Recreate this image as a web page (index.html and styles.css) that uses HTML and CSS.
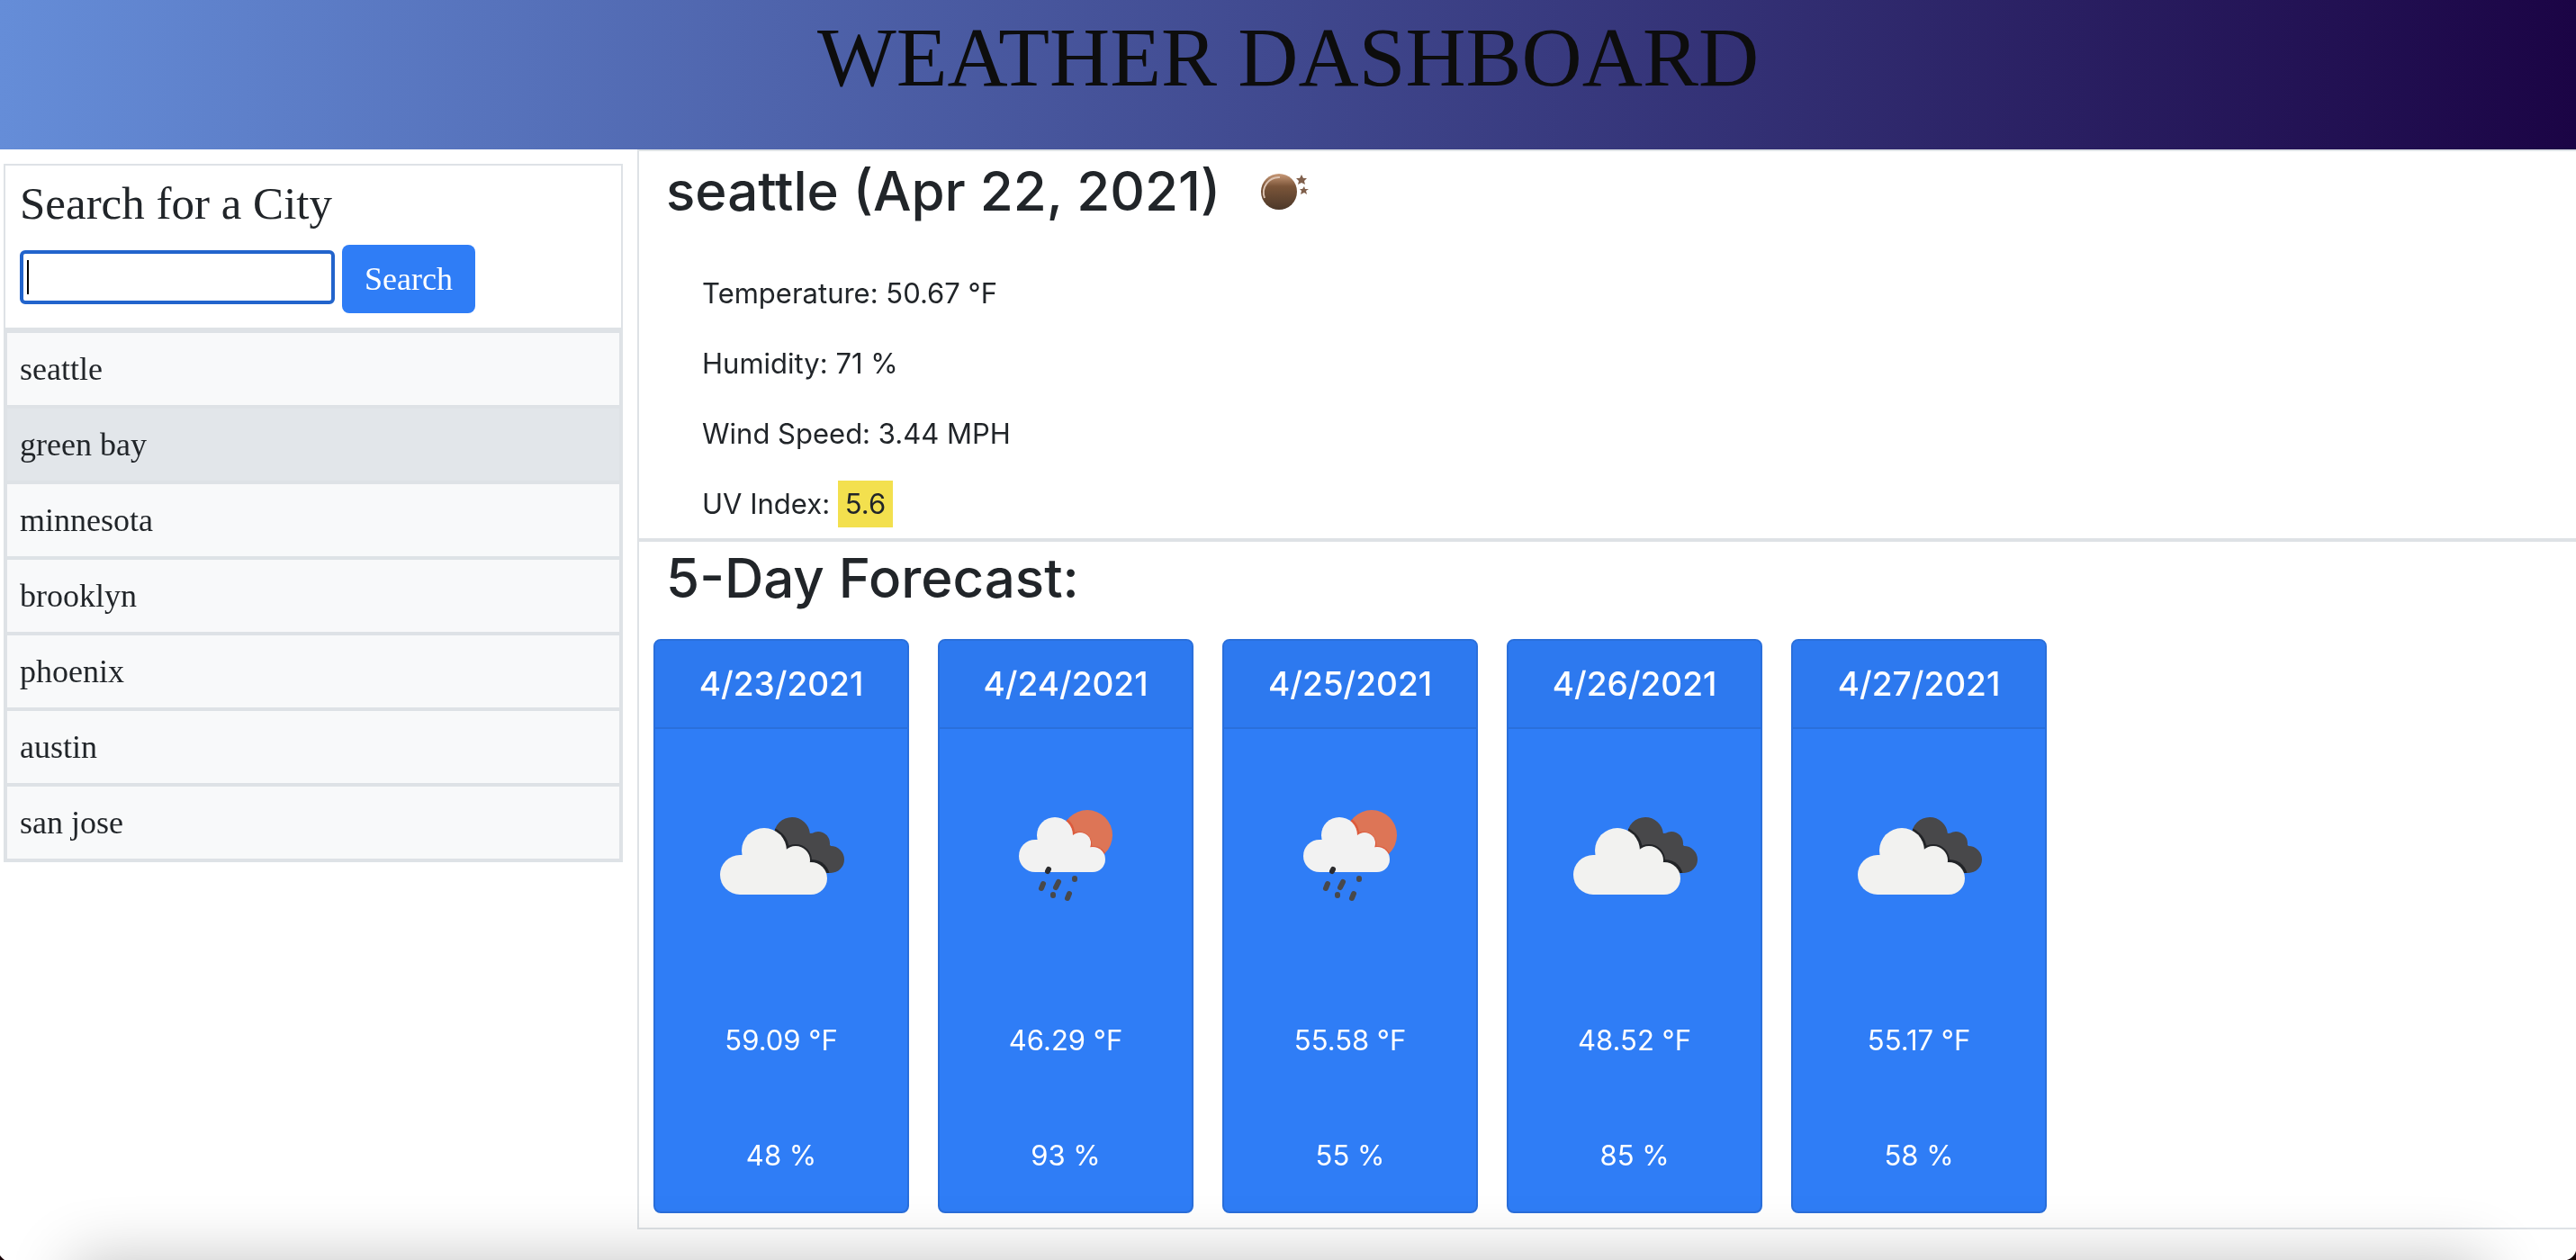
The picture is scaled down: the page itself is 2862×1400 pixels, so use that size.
FILE: index.html
```html
<!DOCTYPE html>
<html lang="en">
<head>
<meta charset="utf-8">
<title>Weather Dashboard</title>
<link rel="stylesheet" href="styles.css">
</head>
<body>
<svg class="sprite" aria-hidden="true">
  <clipPath id="darkcloud"><circle cx="100" cy="78" r="20"/><circle cx="129" cy="87" r="13"/><circle cx="143" cy="105" r="15"/><path d="M60 78h40l29-3 14 15v30H60z"/></clipPath>
  <symbol id="clouds" viewBox="0 0 200 200">
    <g transform="translate(12 0)"><g clip-path="url(#darkcloud)">
      <path fill="#48484a" d="M40 50h130v80H40z"/>
      <g fill="#222427" transform="translate(-12 0)"><circle cx="82" cy="95" r="27"/><circle cx="116" cy="106" r="18"/><circle cx="134" cy="125" r="20"/></g>
    </g></g>
    <g fill="#f2f2f0"><circle cx="54" cy="122" r="22"/><circle cx="81" cy="95" r="25"/><circle cx="116" cy="106" r="16"/><circle cx="133" cy="126" r="18"/><path d="M54 100h62l17 44H54z"/></g>
  </symbol>
  <symbol id="rain" viewBox="0 0 200 200">
    <circle cx="124" cy="78" r="28" fill="#dd7556"/>
    <g fill="#dc5a3c"><path d="M102 60a21 21 0 0 1 8 15a14 14 0 0 1 19 15a15 15 0 0 1 15 8l-20 10-35-25z"/></g>
    <g fill="#f2f2f2"><circle cx="66" cy="101" r="18"/><circle cx="88" cy="78" r="20"/><circle cx="116" cy="87" r="12"/><circle cx="130" cy="105" r="14"/><path d="M66 83h50l14 36H66z"/></g>
    <g stroke="#48484a" stroke-width="6" stroke-linecap="round"><path d="M81 116l-1 2" stroke="#2c2c2e"/><path d="M75 132l-2 5M92 130l-3 6M110 126v1M86 144v1M104 143l-2 5"/></g>
  </symbol>
</svg>

<header class="page-header"><h1>WEATHER DASHBOARD</h1></header>

<div class="layout">
  <aside class="sidebar">
    <form class="search">
      <label for="city">Search for a City</label>
      <div class="search-row">
        <input id="city" type="text" autofocus>
        <button type="button">Search</button>
      </div>
    </form>
    <ul class="history">
      <li><button type="button">seattle</button></li>
      <li><button type="button" class="active">green bay</button></li>
      <li><button type="button">minnesota</button></li>
      <li><button type="button">brooklyn</button></li>
      <li><button type="button">phoenix</button></li>
      <li><button type="button">austin</button></li>
      <li><button type="button">san jose</button></li>
    </ul>
  </aside>

  <main>
    <section class="current">
      <div class="title-row">
        <h2>seattle (Apr 22, 2021)</h2>
        <svg class="moon" viewBox="0 0 100 70" role="img" aria-label="Clear night">
          <defs><linearGradient id="moonfill" x1="0" y1="0" x2="0" y2="1"><stop offset="0" stop-color="#c99a78"/><stop offset=".35" stop-color="#7b5539"/><stop offset="1" stop-color="#4c3829"/></linearGradient></defs>
          <circle cx="47" cy="34" r="20" fill="url(#moonfill)"/>
          <path d="M31 41a17 17 0 0 1 17-23" fill="none" stroke="#dcc3b2" stroke-width="2"/>
          <path d="M72 15l2 4 4 0-3 3 1 4-4-2-4 2 1-4-3-3 4 0zM75 28l1 3 4 0-3 2 1 4-3-2-4 2 1-4-2-2 3 0z" fill="#80604c"/>
        </svg>
      </div>
      <ul class="readings">
        <li>Temperature: 50.67 °F</li>
        <li>Humidity: 71 %</li>
        <li>Wind Speed: 3.44 MPH</li>
        <li>UV Index: <span class="uv">5.6</span></li>
      </ul>
    </section>
    <section class="forecast">
      <h2>5-Day Forecast:</h2>
      <div class="cards">
        <article class="card"><h3>4/23/2021</h3><svg><use href="#clouds"/></svg><p>59.09 °F</p><p>48 %</p></article>
        <article class="card"><h3>4/24/2021</h3><svg><use href="#rain"/></svg><p>46.29 °F</p><p>93 %</p></article>
        <article class="card"><h3>4/25/2021</h3><svg><use href="#rain"/></svg><p>55.58 °F</p><p>55 %</p></article>
        <article class="card"><h3>4/26/2021</h3><svg><use href="#clouds"/></svg><p>48.52 °F</p><p>85 %</p></article>
        <article class="card"><h3>4/27/2021</h3><svg><use href="#clouds"/></svg><p>55.17 °F</p><p>58 %</p></article>
      </div>
    </section>
  </main>
</div>
</body>
</html>
```

FILE: styles.css
```css
* { box-sizing: border-box; }

body {
  margin: 0;
  min-height: 100vh;
  background: #fff;
  color: #212529;
  font: 400 31px/48px Inter, sans-serif;
  overflow-x: hidden;
}

h1, h2, h3, p, ul { margin: 0; padding: 0; }
ul { list-style: none; }
button { font: inherit; color: inherit; }

.sprite { position: absolute; width: 0; height: 0; }

.page-header {
  height: 166px;
  padding-top: 6px;
  background: linear-gradient(to right, #658dd8, #1b0445);
  text-align: center;
}
.page-header h1 {
  color: #0d0d0d;
  font: 400 93px/116px "Liberation Serif", serif;
}

.layout {
  display: grid;
  grid-template-columns: 24.74% 1fr;
  align-items: start;
}

/* Sidebar */
.sidebar {
  padding: 16px 16px 0 4px;
  font: 400 36px/48px "Liberation Serif", serif;
}
.search {
  padding: 12px 16px 16px;
  border: 2px solid #dee2e6;
}
.search label {
  display: block;
  font-size: 51px;
  line-height: 60px;
}
.search-row {
  display: flex;
  align-items: flex-start;
  gap: 8px;
  margin-top: 16px;
}
.search input {
  width: 350px;
  height: 60px;
  margin-top: 6px;
  padding: 2px 4px;
  border: 4px solid #2264cc;
  border-radius: 6px;
  outline: 0;
  /* text caret */
  background: linear-gradient(#000, #000) 4px center / 2px 38px no-repeat;
  caret-color: transparent;
  font: inherit;
}
.search button {
  width: 148px;
  height: 76px;
  padding: 0;
  border: 0;
  border-radius: 8px;
  background: #2f7df6;
  color: #fff;
}
.history { border: 2px solid #dee2e6; }
.history button {
  display: block;
  width: 100%;
  height: 84px;
  padding: 0 14px;
  border: 2px solid #dee2e6;
  background: #f8f9fa;
  text-align: left;
}
.history .active { background: #e2e6ea; }

/* Current conditions and forecast */
section {
  border: 2px solid #dee2e6;
  border-right: 0;
}
h2 { font-size: 60px; font-weight: 500; line-height: 76px; }
.current { padding: 6px 30px 12px; }
.title-row { display: flex; align-items: center; }
.moon { width: 100px; height: 70px; margin: 4px 0 0 18px; }
.readings {
  display: grid;
  gap: 26px;
  padding: 50px 40px 0;
  line-height: 52px;
}
.uv {
  display: inline-block;
  padding: 0 8px;
  background: #f3e04e;
}

.forecast { padding: 2px 16px 16px; }
.forecast h2 { padding-left: 14px; }
.cards {
  display: flex;
  gap: 32px;
  margin-top: 30px;
}
.card {
  width: 284px;
  height: 638px;
  border: 2px solid #2a6fdb;
  border-radius: 8px;
  background: #2f7df6;
  color: #fff;
  text-align: center;
}
.card h3 {
  height: 98px;
  border-bottom: 2px solid #2a6fdb;
  border-radius: 6px 6px 0 0;
  background: #2d79ef;
  font-size: 37px;
  font-weight: 500;
  line-height: 96px;
}
.card svg {
  display: block;
  width: 200px;
  height: 200px;
  margin: 40px auto 82px;
}
.card p { margin-bottom: 80px; }

/* Soft shade along the window's lower edge */
body::after {
  content: "";
  position: fixed;
  bottom: -200px;
  left: 80px;
  right: 100px;
  height: 200px;
  box-shadow: 0 0 70px rgba(0, 0, 0, .24);
  pointer-events: none;
}
/* Dark rounded corners of the window */
body::before {
  content: "";
  position: fixed;
  inset: auto 0 0 0;
  height: 14px;
  background:
    radial-gradient(circle at 0 0, transparent 14px, #1a0508 15px) right / 14px 14px no-repeat,
    radial-gradient(circle at 100% 0, transparent 16px, #1a0508 17px) left / 14px 14px no-repeat;
  pointer-events: none;
}
```
